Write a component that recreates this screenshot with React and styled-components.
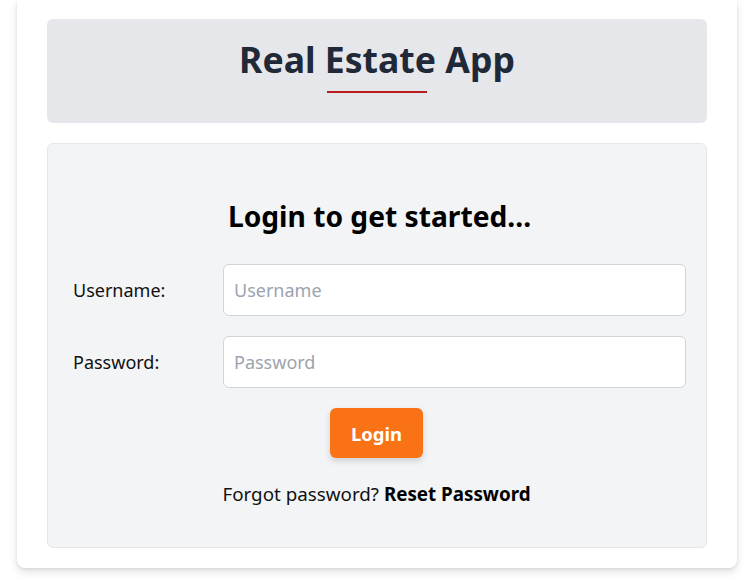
import React from 'react';
import styled, { createGlobalStyle } from 'styled-components';

const GlobalStyle = createGlobalStyle`
	* {
		box-sizing: border-box;
	}
	body {
		margin: 0;
		background: #ffffff;
		font-family: 'Noto Sans', 'Open Sans', sans-serif;
		color: #000000;
	}
`;

const Page = styled.div`
	padding: 0 14px 14px 17px;
`;

const Shell = styled.main`
	width: 720px;
	background: #ffffff;
	border-radius: 0 0 8px 8px;
	box-shadow: 0 4px 8px rgba(0, 0, 0, 0.12), 0 1px 3px rgba(0, 0, 0, 0.08);
	padding: 19px 30px 20px;
	display: flex;
	flex-direction: column;
	gap: 20px;
`;

const Header = styled.header`
	height: 104px;
	background: #e5e7eb;
	border-radius: 6px;
	display: flex;
	flex-direction: column;
	align-items: center;
	padding-top: 18px;
`;

const Title = styled.h1`
	margin: 0;
	font-size: 35.6px;
	line-height: 45px;
	font-weight: 700;
	color: #1f2937;
`;

const Underline = styled.span`
	display: block;
	width: 100px;
	height: 2px;
	margin-top: 9px;
	background: #b91c1c;
`;

const Card = styled.section`
	background: #f3f4f6;
	border: 1px solid #e5e7eb;
	border-radius: 6px;
	padding: 52px 20px 40px 25px;
	display: flex;
	flex-direction: column;
	align-items: stretch;
`;

const Heading = styled.h2`
	margin: 0 0 28px;
	text-align: center;
	font-size: 28.2px;
	line-height: 40px;
	font-weight: 700;
	color: #000000;
`;

const Row = styled.label`
	display: grid;
	grid-template-columns: 150px 1fr;
	align-items: center;
	margin-bottom: 20px;
`;

const LabelText = styled.span`
	font-size: 18px;
	color: #111111;
`;

const Input = styled.input`
	height: 52px;
	width: 100%;
	border: 1px solid #d1d5db;
	border-radius: 6px;
	background: #ffffff;
	padding: 0 10px;
	font-family: inherit;
	font-size: 18px;
	color: #111827;
	outline: none;

	&::placeholder {
		color: #9ca3af;
	}
`;

const Actions = styled.div`
	display: flex;
	justify-content: center;
	padding-right: 6px;
`;

const LoginButton = styled.button`
	width: 93px;
	height: 50px;
	border: none;
	border-radius: 6px;
	background: #f97316;
	color: #ffffff;
	font-family: inherit;
	font-size: 18.5px;
	font-weight: 700;
	box-shadow: 0 3px 6px rgba(0, 0, 0, 0.15);
	cursor: pointer;
`;

const Forgot = styled.p`
	margin: 23px 0 0;
	padding-right: 6px;
	text-align: center;
	font-size: 18.8px;
	line-height: 26px;
	color: #111111;

	& b {
		font-weight: 700;
		color: #000000;
	}
`;

const App = () => {
	return (
		<Page>
			<GlobalStyle />
			<Shell>
				<Header>
					<Title>Real Estate App</Title>
					<Underline />
				</Header>
				<Card>
					<Heading>Login to get started...</Heading>
					<Row>
						<LabelText>Username:</LabelText>
						<Input type="text" placeholder="Username" />
					</Row>
					<Row>
						<LabelText>Password:</LabelText>
						<Input type="password" placeholder="Password" />
					</Row>
					<Actions>
						<LoginButton>Login</LoginButton>
					</Actions>
					<Forgot>
						Forgot password? <b>Reset Password</b>
					</Forgot>
				</Card>
			</Shell>
		</Page>
	);
};

export default App;
